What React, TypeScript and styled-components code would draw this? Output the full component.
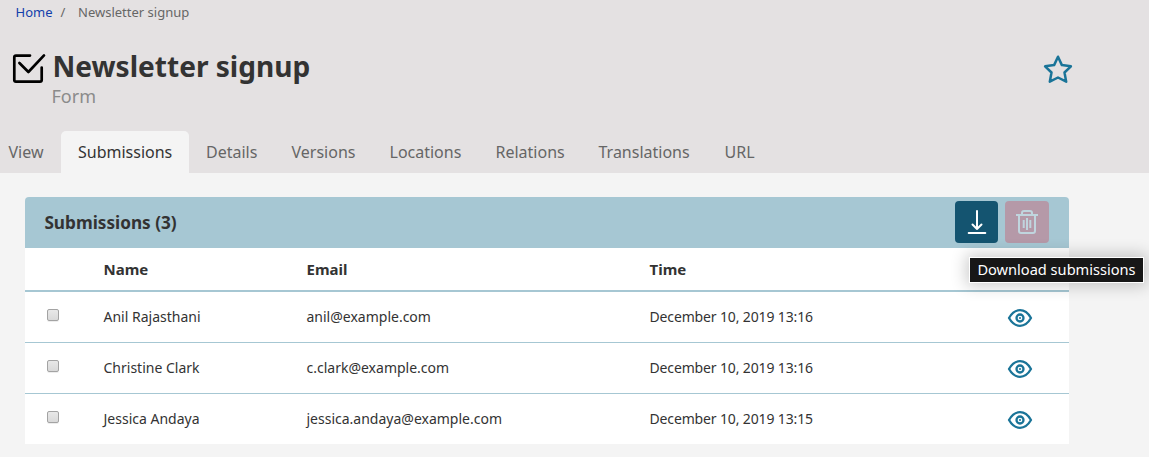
import React from "react";
import styled, { createGlobalStyle } from "styled-components";

const GlobalStyle = createGlobalStyle`
  *, *::before, *::after { box-sizing: border-box; }
  body {
    margin: 0;
    min-height: 457px;
    overflow: hidden;
    background: #f4f4f4;
    color: #333;
    font-family: "Noto Sans", "Open Sans", sans-serif;
    font-size: 14px;
  }
`;

const Header = styled.header`
  display: flex;
  flex-direction: column;
  height: 173px;
  background: #e4e1e2;
`;

const Breadcrumb = styled.nav`
  display: flex;
  height: 25px;
  padding-left: 15.5px;
  font-size: 13px;
  line-height: 25px;
  color: #666;
  white-space: pre;
`;

const HomeLink = styled.a`
  width: 45px;
  color: #1240ab;
`;

const Separator = styled.span`
  width: 17.5px;
`;

const TitleBar = styled.div`
  display: flex;
  align-items: flex-start;
  flex: 1;
  padding: 22px 76px 0 12px;
`;

const FormIcon = styled.svg`
  flex: none;
  width: 34px;
  height: 34px;
  margin: 5px 5.5px 0 0;
  fill: none;
  stroke: #000;
  stroke-width: 2.7;
  stroke-linecap: round;
  stroke-linejoin: round;
`;

const TitleText = styled.div`
  flex: 1;
`;

const Title = styled.h1`
  margin: 0;
  padding-left: 1px;
  font-size: 28.08px;
  line-height: 38px;
  font-weight: 700;
  white-space: nowrap;
`;

const Subtitle = styled.div`
  font-size: 18px;
  line-height: 22px;
  color: #8b8b8b;
`;

const StarIcon = styled.svg`
  flex: none;
  width: 30px;
  height: 30px;
  margin-top: 7px;
  fill: none;
  stroke: #1a7498;
  stroke-width: 2.5;
  stroke-linejoin: round;
`;

const Tabs = styled.div`
  display: flex;
  height: 42px;
  padding-left: 8.5px;
`;

const Tab = styled.a<{ $active?: boolean; $width: number }>`
  width: ${(p) => p.$width}px;
  padding-left: ${(p) => (p.$active ? 17 : 0)}px;
  border-radius: 5px 5px 0 0;
  background: ${(p) => (p.$active ? "#f4f4f4" : "transparent")};
  color: ${(p) => (p.$active ? "#333" : "#666")};
  font-size: 16px;
  line-height: 42px;
  white-space: nowrap;
`;

const Panel = styled.section`
  width: 1044px;
  margin: 24px 0 0 25px;
`;

const PanelHeader = styled.div`
  display: flex;
  align-items: center;
  height: 51px;
  padding: 0 20px 1px 19.4px;
  border-radius: 4px 4px 0 0;
  background: #a6c7d3;
`;

const PanelTitle = styled.h2`
  flex: 1;
  margin: 1px 0 0;
  font-size: 17.2px;
  line-height: 24px;
  font-weight: 700;
`;

const ActionButton = styled.button<{ $danger?: boolean }>`
  position: relative;
  display: flex;
  width: ${(p) => (p.$danger ? 44 : 43)}px;
  height: 42px;
  margin: 0 0 0 ${(p) => (p.$danger ? 7 : 0)}px;
  padding: 0;
  border: 0;
  border-radius: 4px;
  background: ${(p) => (p.$danger ? "#b599a8" : "#145470")};
  color: ${(p) => (p.$danger ? "#c0d5de" : "#fff")};
`;

const ButtonIcon = styled.svg`
  width: 100%;
  height: 42px;
  fill: none;
  stroke: currentColor;
  stroke-width: 2;
  stroke-linejoin: round;
`;

const Tooltip = styled.div`
  position: absolute;
  z-index: 2;
  top: 56px;
  left: 14px;
  width: 175px;
  height: 26px;
  border: 1px solid #fff;
  background: #171717;
  box-shadow: 0 0 16px 3px rgba(0, 0, 0, 0.2);
  color: #fff;
  font-family: "Noto Sans", sans-serif;
  font-size: 14.6px;
  line-height: 22px;
  text-align: center;
  white-space: nowrap;
`;

const Table = styled.div`
  background: #fff;
`;

const Row = styled.div<{ $head?: boolean; $last?: boolean }>`
  display: grid;
  grid-template-columns: 78.5px 203px 343px 358.5px 1fr;
  align-items: center;
  height: ${(p) => (p.$head ? 44 : p.$last ? 50 : 51)}px;
  padding-bottom: ${(p) => (p.$head ? 1 : 0)}px;
  border-bottom: ${(p) => (p.$head ? 2 : p.$last ? 0 : 1)}px solid #a6c7d3;
  font-size: ${(p) => (p.$head ? 15 : 14)}px;
  font-weight: ${(p) => (p.$head ? 700 : 400)};
  line-height: 20px;
  white-space: nowrap;
`;

const Time = styled.span`
  letter-spacing: -0.14px;
`;

const Checkbox = styled.span`
  width: 12px;
  height: 12px;
  margin: 0 0 4px 22px;
  border: 1px solid #a3a3a3;
  border-radius: 2px;
  background: linear-gradient(#e8e8e8, #d9d9d9);
  box-shadow: 0 1px 0 rgba(0, 0, 0, 0.07);
`;

const EyeIcon = styled.svg`
  display: block;
  width: 26px;
  height: 20px;
  margin: 2px 0 0 -1px;
  fill: none;
  stroke: #1a7498;
  stroke-width: 2.3;
  stroke-linejoin: round;
`;

const tabs = [
  { label: "View", width: 52.5 },
  { label: "Submissions", width: 128, active: true },
  { label: "Details", width: 85.5 },
  { label: "Versions", width: 98 },
  { label: "Locations", width: 106 },
  { label: "Relations", width: 103 },
  { label: "Translations", width: 126 },
  { label: "URL", width: 40 },
];

const submissions = [
  { name: "Anil Rajasthani", email: "anil@example.com", time: "December 10, 2019 13:16" },
  { name: "Christine Clark", email: "c.clark@example.com", time: "December 10, 2019 13:16" },
  { name: "Jessica Andaya", email: "jessica.andaya@example.com", time: "December 10, 2019 13:15" },
];

export default function App() {
  return (
    <>
      <GlobalStyle />
      <Header>
        <Breadcrumb>
          <HomeLink>Home</HomeLink>
          <Separator>/</Separator>
          <span>Newsletter signup</span>
        </Breadcrumb>
        <TitleBar>
          <FormIcon viewBox="0 0 34 34">
            <path d="M18 3.600H4q-1.700 0-1.700 1.700V28q0 1.700 1.700 1.700h24q1.700 0 1.700-1.700V15.500M7.400 11l9 9L32 3.400" />
          </FormIcon>
          <TitleText>
            <Title>Newsletter signup</Title>
            <Subtitle>Form</Subtitle>
          </TitleText>
          <StarIcon viewBox="0 0 30 30">
            <path d="M15 2.700l3.900 8.400 9 1.200-6.400 6.200 1.700 9.200L15 23.500l-8.200 4.200 1.700-9.200-6.400-6.200 9-1.200z" />
          </StarIcon>
        </TitleBar>
        <Tabs>
          {tabs.map((t, i) => (
            <React.Fragment key={t.label}>
              <Tab $active={t.active} $width={t.width}>
                {t.label}
              </Tab>
              {i === 1 && <Tab $width={17} />}
            </React.Fragment>
          ))}
        </Tabs>
      </Header>
      <Panel>
        <PanelHeader>
          <PanelTitle>Submissions (3)</PanelTitle>
          <ActionButton>
            <ButtonIcon viewBox="0 0 43 42" strokeLinecap="round">
              <path d="M22 10v18M17.500 23.500l4.500 4.500 4.500-4.500M13.700 32h16.600" />
            </ButtonIcon>
            <Tooltip>Download submissions</Tooltip>
          </ActionButton>
          <ActionButton $danger>
            <ButtonIcon viewBox="0 0 44 42">
              <path d="M11 14h22M17 14v-2q0-2 2-2h6q2 0 2 2v2M14 14v16q0 2 2 2h12q2 0 2-2V14" />
              <path d="M18.700 19v8M22 17v12M25.300 19v8" />
            </ButtonIcon>
          </ActionButton>
        </PanelHeader>
        <Table>
          <Row $head>
            <span />
            <span>Name</span>
            <span>Email</span>
            <span>Time</span>
          </Row>
          {submissions.map((s, i) => (
            <Row key={s.name} $last={i === submissions.length - 1}>
              <Checkbox />
              <span>{s.name}</span>
              <span>{s.email}</span>
              <Time>{s.time}</Time>
              <EyeIcon viewBox="0 0 26 20">
                <path d="M2 10q4.500-7.800 11-7.800T24 10q-4.500 7.800-11 7.800T2 10z" />
                <circle cx="13" cy="10" r="3.500" />
                <circle cx="13" cy="10" r="0.700" strokeWidth="1" />
              </EyeIcon>
            </Row>
          ))}
        </Table>
      </Panel>
    </>
  );
}
